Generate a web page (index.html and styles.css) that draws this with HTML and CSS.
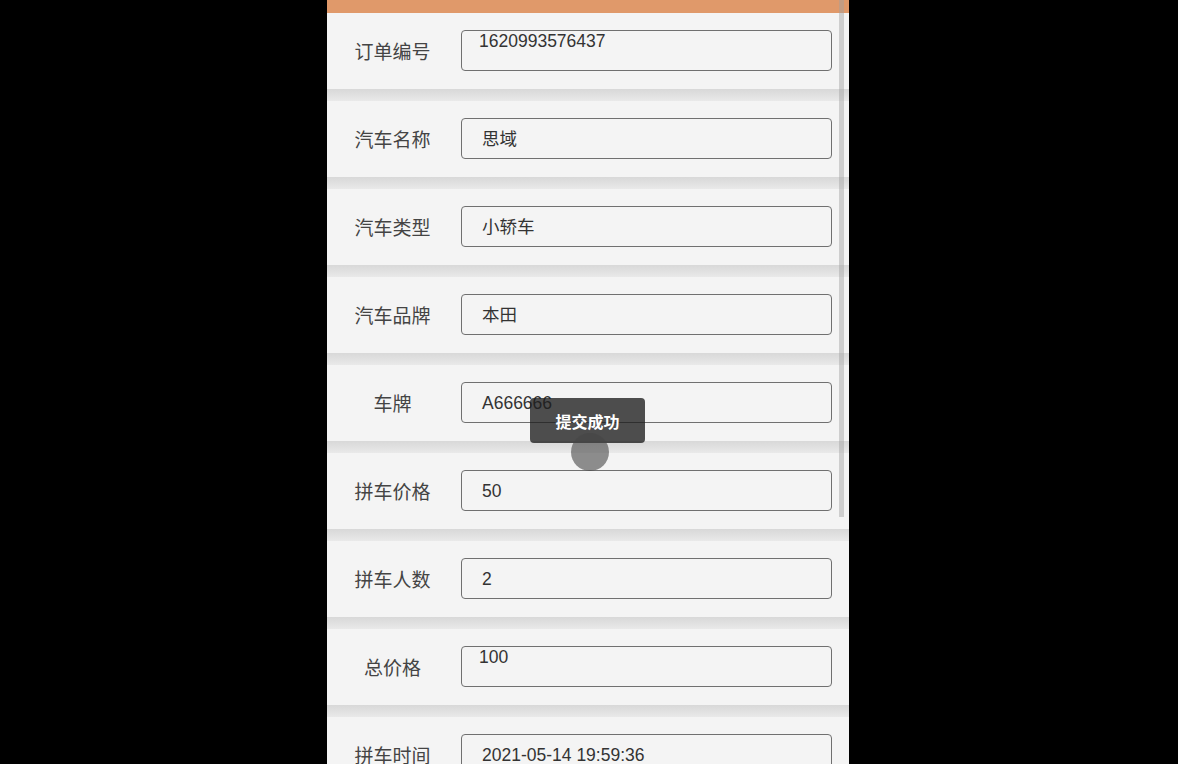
FILE: index.html
```html
<!DOCTYPE html>
<html lang="zh">
<head>
    <meta charset="UTF-8">
    <title>拼车订单</title>
    <link rel="stylesheet" href="styles.css">
</head>
<body>
<div class="page">
    <div class="topBar"></div>
    <div class="row">
        <span class="label">订单编号</span>
        <div class="field top">1620993576437</div>
    </div>
    <div class="sep"></div>
    <div class="row">
        <span class="label">汽车名称</span>
        <div class="field">思域</div>
    </div>
    <div class="sep"></div>
    <div class="row">
        <span class="label">汽车类型</span>
        <div class="field">小轿车</div>
    </div>
    <div class="sep"></div>
    <div class="row">
        <span class="label">汽车品牌</span>
        <div class="field">本田</div>
    </div>
    <div class="sep"></div>
    <div class="row">
        <span class="label">车牌</span>
        <div class="field">A666666</div>
    </div>
    <div class="sep"></div>
    <div class="row">
        <span class="label">拼车价格</span>
        <div class="field">50</div>
    </div>
    <div class="sep"></div>
    <div class="row">
        <span class="label">拼车人数</span>
        <div class="field">2</div>
    </div>
    <div class="sep"></div>
    <div class="row">
        <span class="label">总价格</span>
        <div class="field top">100</div>
    </div>
    <div class="sep"></div>
    <div class="row">
        <span class="label">拼车时间</span>
        <div class="field">2021-05-14 19:59:36</div>
    </div>
    <div class="scrollbar"></div>
    <div class="toast">提交成功</div>
    <div class="touch"></div>
</div>
</body>
</html>
```

FILE: styles.css
```css
body{
    margin: 0;
    background-color: #000;
    height: 764px;
    overflow: hidden;
    font-family: "Liberation Sans", "Noto Sans CJK SC", sans-serif;
}
.page{
    position: relative;
    width: 522px;
    margin-left: 327px;
    background-color: #f4f4f4;
}
.topBar{
    height: 13px;
    background-color: #e0996a;
}
.row{
    display: flex;
    align-items: flex-start;
    height: 76px;
    padding-top: 17px;
    box-sizing: border-box;
}
.label{
    width: 131px;
    height: 41px;
    line-height: 45px;
    text-align: center;
    font-size: 19px;
    color: #444;
}
.field{
    margin-left: 3px;
    width: 371px;
    height: 41px;
    box-sizing: border-box;
    border: 1px solid #707070;
    border-radius: 4px;
    padding-left: 20px;
    line-height: 41px;
    font-size: 17.5px;
    color: #333;
}
.field.top{
    padding-left: 17px;
    line-height: 20px;
}
.sep{
    height: 12px;
    background: linear-gradient(#d8d8d8, #e9e9e9);
}
.scrollbar{
    position: absolute;
    left: 512px;
    top: 0;
    width: 5px;
    height: 517px;
    background-color: rgba(160, 160, 160, 0.45);
}
.toast{
    position: absolute;
    left: 203px;
    top: 398px;
    width: 115px;
    height: 45px;
    line-height: 49px;
    border-radius: 4px;
    background-color: rgba(30, 30, 30, 0.78);
    color: #fff;
    font-weight: bold;
    font-size: 16px;
    text-align: center;
}
.touch{
    position: absolute;
    left: 244px;
    top: 433px;
    width: 38px;
    height: 38px;
    border-radius: 50%;
    background-color: rgba(70, 70, 70, 0.6);
}
```
